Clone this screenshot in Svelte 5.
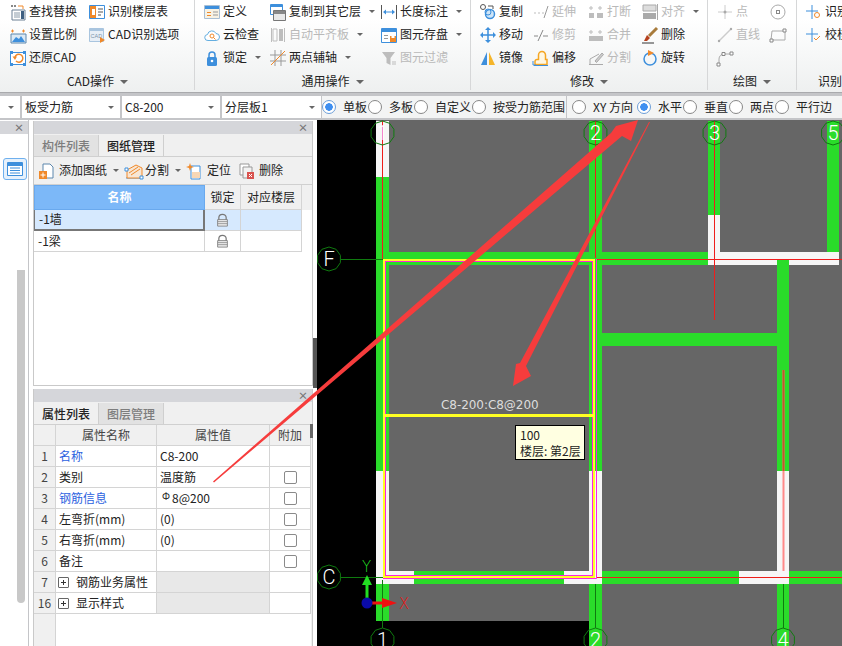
<script>
	// 16x16 ribbon and panel icons, kept as plain svg markup
	const B = '#3d8fdc';
	const O = '#f0892a';
	const G = '#bdbdbd';
	const icons = {
		find: `<path d="M1 1h2v2H1zM4 1h2v2H4z" fill="#888"/><path d="M8 2h5v3" fill="none" stroke="${O}"/><path d="M2 6h13v10H2z" fill="#fff" stroke="#6d8094"/><path d="M4 9h6M4 11h6M4 13h6" stroke="#8a9aa8"/><path d="M11 7h3v8h-3z" fill="#3f5f80"/>`,
		floors: `<path d="M.5 1.5h15v13H.5z" fill="#fff" stroke="${B}"/><path d="M1 2h6v12H1z" fill="${O}"/><path d="M9 5h5M9 8h5M9 11h3" stroke="#555"/><path d="M3 5h3v6H3z" fill="#fff"/>`,
		scale: `<path d="M1 4h3M2.500 2.500v3M12 4h3M13.500 2.500v3" stroke="${O}"/><path d="M1 7h15v9H1z" fill="#dbe9f5" stroke="#5d87ad"/><path d="M2 15l4-5 3 2 2-3 4 6z" fill="${B}"/>`,
		cad: `<path d="M.5 1.5h14v13H.5z" fill="#e7eef6" stroke="#a9c5df"/><path d="M1 2h13v2H1z" fill="#a9c5df"/><text x="1.500" y="11" font-size="5.500" fill="#7d95ab" font-family="Liberation Sans">CAD</text><path d="M11 10l5 3-5 3z" fill="${O}"/>`,
		restore: `<path d="M.5 2.500h15v12H.5z" fill="#fff" stroke="${B}"/><path d="M0 1h3v3H0zM13 1h3v3h-3zM0 13h3v3H0zM13 13h3v3h-3z" fill="${B}"/><path d="M5 7a4 4 0 1 1 1 4" fill="none" stroke="${O}" stroke-width="1.500"/><path d="M2.500 6.500H7L5 10z" fill="${O}"/>`,
		define: `<path d="M.5 1.500h15v13H.5z" fill="#f7f2e4" stroke="#a9bfd4"/><path d="M1 2h14v3H1z" fill="${B}"/><path d="M3 8h4v1H3zM3 11h4v1H3z" fill="${O}"/><path d="M9 8h5M9 11h5" stroke="#999"/>`,
		cloud: `<path d="M4 13.500a3 3 0 0 1-.500-6 4.500 4.500 0 0 1 8.500-1 3.500 3.500 0 0 1 0 7z" fill="#fff" stroke="#64aee0"/><circle cx="8" cy="9" r="2" fill="none" stroke="${O}"/><path d="M9.500 10.500l2 2" stroke="${O}"/>`,
		lock: `<path d="M5 8V5a3 3 0 0 1 6 0v3" fill="none" stroke="${B}" stroke-width="1.500"/><rect x="3" y="7" width="10" height="9" rx="1.500" fill="${B}"/><circle cx="8" cy="11" r="1.300" fill="#fff"/>`,
		copyFloor: `<path d="M.5.500h12v10H.5z" fill="#fff" stroke="${B}"/><path d="M1 1h11v2H1z" fill="${B}"/><path d="M3.500 6.500h12v10h-12z" fill="#e9e9e9" stroke="#777"/><path d="M4 7h11v3H4z" fill="#888"/>`,
		level: `<path d="M1.500 1v14M14.500 1v14" stroke="${G}"/><path d="M3 2h4v12H3z" fill="none" stroke="${G}"/><path d="M9 2h4v12H9z" fill="${G}"/>`,
		axes: `<path d="M0 5h16M0 11h16M5 0v16M11 0v16" stroke="#999"/><path d="M1 15L15 1" stroke="${O}"/>`,
		length: `<path d="M.5 1v14M15.500 1v14" stroke="#555"/><path d="M3 8h10" stroke="${B}"/><path d="M2 8l3-2.500v5zM14 8l-3-2.500v5z" fill="${B}"/>`,
		save: `<path d="M.5 1.500h15v14H.5z" fill="#fff" stroke="${B}"/><path d="M1 2h14v3H1z" fill="${B}"/><path d="M3 8h4v1H3zM3 11h4v1H3z" fill="#999"/><path d="M9 9h6v6H9z" fill="${O}"/><path d="M10.500 9h3v2h-3z" fill="#fff"/>`,
		filter: `<path d="M1 2h13L9.500 8v7l-4-2V8z" fill="${G}"/><path d="M11 12h4M11 14h4" stroke="${G}"/>`,
		copy: `<circle cx="3" cy="3" r="2.500" fill="#fff" stroke="#555"/><circle cx="10" cy="10" r="4.500" fill="#cfe5f7" stroke="${B}" stroke-width="1.500"/><circle cx="8" cy="8" r="3" fill="none" stroke="${B}"/><path d="M8 2h5v3" fill="none" stroke="#555"/>`,
		move: `<path d="M8 2v12M2 8h12" stroke="${B}" stroke-width="1.500"/><path d="M8 0l3 3H5zM8 16l3-3H5zM0 8l3-3v6zM16 8l-3-3v6z" fill="${B}"/>`,
		mirror: `<path d="M7 2v13H1z" fill="${B}"/><path d="M9 2v13h6z" fill="#f5b52a"/>`,
		extend: `<path d="M1 9h2M5 9h2M9 9h2" stroke="${G}"/><path d="M11 14l4-12" stroke="#999"/>`,
		trim: `<path d="M1 9h4M10 9h5" stroke="#888"/><path d="M5 14l5-11" stroke="#888"/>`,
		offset: `<path d="M2 14.500v-3a2 2 0 0 1 2-2h1.500V5a3.500 3.500 0 0 1 7 0v4.500H14v5z" fill="#fff7e2" stroke="#f5a623" stroke-width="1.500"/><path d="M0 11v4h3" fill="none" stroke="${B}"/><path d="M1 15.500h14" stroke="${B}"/>`,
		breakAt: `<path d="M1 9h5v5H1zM9 9h6v5H9z" fill="${G}"/><path d="M3 2v4M1 4h4M12 2v4M10 4h4" stroke="${G}"/>`,
		merge: `<path d="M1 9h14v5H1z" fill="${G}"/><path d="M3 3v4M1 5h4M12 3v4M10 5h4" stroke="${G}"/>`,
		split: `<path d="M1 14.500h14M2 15V9l9-5" fill="none" stroke="#aaa"/><path d="M7 11l7-8 1.500 1.500-7 8z" fill="#ccc" stroke="#aaa"/>`,
		align: `<path d="M1 1h13v6H1z" fill="#ddd" stroke="#aaa"/><path d="M1 9h13v6H1z" fill="#aaa"/><path d="M15.500 0v16" stroke="#aaa"/>`,
		erase: `<path d="M15 1L7 9" stroke="#a87b3c" stroke-width="3"/><path d="M5 8l3 3-3 3H2z" fill="#b5401d"/><path d="M0 16h12" stroke="#333"/>`,
		rotate: `<circle cx="8" cy="9" r="6" fill="none" stroke="${B}" stroke-width="1.500"/><path d="M6 0l6 3-6 3z" fill="${O}"/>`,
		point: `<path d="M8 1v14M1 8h14" stroke="#ccc"/><circle cx="8" cy="8" r="1.500" fill="#aaa"/>`,
		circle: `<circle cx="8" cy="8" r="7" fill="none" stroke="#aaa"/><rect x="6.500" y="6.500" width="3" height="3" fill="#fff" stroke="#888"/>`,
		line: `<path d="M2 14L14 2" stroke="#ccc" stroke-width="1.500"/><circle cx="2" cy="14" r="1.200" fill="#aaa"/><circle cx="14" cy="2" r="1.200" fill="#aaa"/>`,
		rect: `<path d="M2 4h13v9H1z" fill="none" stroke="#aaa"/><path d="M0 12h3v3H0zM13 2h3v3h-3z" fill="#fff" stroke="#888"/>`,
		arc: `<path d="M2 15V9a5 5 0 0 1 5-5h7" fill="none" stroke="#aaa"/><path d="M0 13h3v3H0zM5 2.500h3v3H5zM13 2h3v3h-3z" fill="#fff" stroke="#888"/>`,
		recogA: `<path d="M6 1v14M0 7h12" stroke="${B}"/><circle cx="11" cy="11" r="2.500" fill="none" stroke="${O}"/>`,
		recogB: `<path d="M6 1v14M0 7h12" stroke="${B}"/><path d="M8 11l2 2 4-4" fill="none" stroke="${O}"/>`,
		addSheet: `<path d="M4 1h7l3 3v11H4z" fill="#fff" stroke="#5d87ad"/><path d="M0 8h8v8H0z" fill="${O}"/><path d="M4 9.500v5M1.500 12h5" stroke="#fff"/>`,
		cutSheet: `<path d="M1 15h16" stroke="${B}"/><path d="M2 15V7l9-5 6 3v10z" fill="#f7e6d4" stroke="${O}"/><path d="M4 10l9-6M6 12l9-6" stroke="${O}"/><path d="M0 5h3v3H0zM15 13h3v3h-3z" fill="#fff" stroke="${B}"/>`,
		locate: `<path d="M4 3h9v13H4z" fill="#fff" stroke="${B}"/><path d="M5 9h8v6H5z" fill="#f7d7b5"/><path d="M3 0l1 3 3 1-3 1-1 3-1-3-3-1 3-1z" fill="${O}"/>`,
		delSheet: `<path d="M1 1h9v11H1z" fill="#fff" stroke="#999"/><path d="M4 4h9v11H4z" fill="#f2f2f2" stroke="#999"/><path d="M8 9h7v7H8z" fill="#d9534f"/><path d="M10 11l3 3M13 11l-3 3" stroke="#fff"/>`,
		padlock: `<path d="M3.500 8V5a4.500 4 0 0 1 9 0v3" fill="none" stroke="#777" stroke-width="1.500"/><path d="M2 7.500h12v8H2z" fill="#eee" stroke="#777"/><path d="M2 10h12M2 12.500h12" stroke="#888"/>`,
		dock: `<path d="M.5 1.500h15v13H.5z" fill="#fff" stroke="${B}"/><path d="M1 2h14v3H1z" fill="${B}"/><path d="M3 7h10M3 9.500h10M3 12h10" stroke="${B}"/>`
	};

	const groups = [
		{
			label: 'CAD操作', width: 195, widths: [79, 100],
			cols: [
				[{ i: 'find', t: '查找替换' }, { i: 'scale', t: '设置比例' }, { i: 'restore', t: '还原CAD' }],
				[{ i: 'floors', t: '识别楼层表' }, { i: 'cad', t: 'CAD识别选项' }]
			]
		},
		{
			label: '通用操作', width: 276, widths: [66, 111, 85],
			cols: [
				[{ i: 'define', t: '定义' }, { i: 'cloud', t: '云检查' }, { i: 'lock', t: '锁定', caret: true }],
				[{ i: 'copyFloor', t: '复制到其它层', caret: true }, { i: 'level', t: '自动平齐板', caret: true, off: true }, { i: 'axes', t: '两点辅轴', caret: true }],
				[{ i: 'length', t: '长度标注', caret: true }, { i: 'save', t: '图元存盘', caret: true }, { i: 'filter', t: '图元过滤', off: true }]
			]
		},
		{
			label: '修改', width: 237, widths: [53, 55, 54, 60],
			cols: [
				[{ i: 'copy', t: '复制' }, { i: 'move', t: '移动' }, { i: 'mirror', t: '镜像' }],
				[{ i: 'extend', t: '延伸', off: true }, { i: 'trim', t: '修剪', off: true }, { i: 'offset', t: '偏移' }],
				[{ i: 'breakAt', t: '打断', off: true }, { i: 'merge', t: '合并', off: true }, { i: 'split', t: '分割', off: true }],
				[{ i: 'align', t: '对齐', caret: true, off: true }, { i: 'erase', t: '删除' }, { i: 'rotate', t: '旋转' }]
			]
		},
		{
			label: '绘图', width: 89, widths: [53, 20],
			cols: [
				[{ i: 'point', t: '点', off: true }, { i: 'line', t: '直线', off: true }, { i: 'arc', t: '' }],
				[{ i: 'circle', t: '' }, { i: 'rect', t: '' }]
			]
		},
		{
			label: '识别', width: 60, widths: [60],
			cols: [[{ i: 'recogA', t: '识别' }, { i: 'recogB', t: '校核' }]]
		}
	];

	const selects = [
		{ t: '', w: 20 },
		{ t: '板受力筋', w: 98 },
		{ t: 'C8-200', w: 98 },
		{ t: '分层板1', w: 99 }
	];

	const radios = [
		{ t: '单板', on: true, w: 46 },
		{ t: '多板', w: 46 },
		{ t: '自定义', w: 58 },
		{ t: '按受力筋范围', w: 100 },
		{ t: 'XY 方向', w: 65, sep: true },
		{ t: '水平', on: true, w: 46 },
		{ t: '垂直', w: 46 },
		{ t: '两点', w: 46 },
		{ t: '平行边', w: 58 }
	];

	const sheetRows = [
		{ name: '-1墙', active: true },
		{ name: '-1梁' }
	];

	const props = [
		{ n: '1', name: '名称', val: 'C8-200', link: true },
		{ n: '2', name: '类别', val: '温度筋', check: true },
		{ n: '3', name: '钢筋信息', val: '8@200', link: true, check: true, bar: true },
		{ n: '4', name: '左弯折(mm)', val: '(0)', check: true },
		{ n: '5', name: '右弯折(mm)', val: '(0)', check: true },
		{ n: '6', name: '备注', val: '', check: true },
		{ n: '7', name: '钢筋业务属性', group: true },
		{ n: '16', name: '显示样式', group: true }
	];

	// plan geometry, in page coordinates (the svg viewBox starts at 317,120)
	const GREEN = '#2adc2a';
	const WHITE = '#f6f6f6';
	const walls = [
		[376, 121, 13, 56, WHITE], [376, 177, 13, 294, GREEN], [376, 471, 13, 112, WHITE], [376, 583, 13, 38, GREEN],
		[589, 121, 13, 350, GREEN], [589, 471, 13, 112, WHITE], [589, 583, 13, 63, GREEN],
		[708, 121, 12, 94, GREEN], [708, 215, 12, 50, WHITE],
		[827, 121, 12, 138, GREEN],
		[777, 259, 12, 212, GREEN], [777, 471, 12, 112, WHITE], [777, 583, 12, 63, GREEN],
		[376, 252, 332, 13, GREEN],
		[720, 252, 119, 7, WHITE], [720, 259, 57, 6, WHITE], [789, 259, 50, 6, WHITE],
		[602, 333, 175, 13, GREEN],
		[376, 571, 38, 13, WHITE], [414, 571, 150, 13, GREEN], [564, 571, 38, 13, WHITE],
		[602, 571, 137, 13, GREEN], [739, 571, 50, 13, WHITE], [789, 571, 53, 13, GREEN]
	];
	const bubbles = [
		{ x: 382.5, y: 133, t: '1' }, { x: 595.5, y: 133, t: '2' }, { x: 714.5, y: 133, t: '3' }, { x: 833, y: 133, t: '5' },
		{ x: 329, y: 259, t: 'F' }, { x: 329, y: 577, t: 'C' },
		{ x: 382.5, y: 640, t: '1' }, { x: 595.5, y: 640, t: '2' }, { x: 783, y: 640, t: '4' }
	];
	const decagon = Array.from({ length: 10 }, (_, k) => {
		const a = (k * Math.PI) / 5 + Math.PI / 10;
		return `${(12 * Math.cos(a)).toFixed(1)},${(12 * Math.sin(a)).toFixed(1)}`;
	}).join(' ');
</script>

{#snippet icon(name)}
	<svg class="ico" viewBox="0 0 16 16" aria-hidden="true">{@html icons[name]}</svg>
{/snippet}

<div class="app">
	<header class="ribbon">
		{#each groups as g}
			<section class="group" style="width:{g.width}px">
				<div class="cols">
					{#each g.cols as col, c}
						<div class="col" style="width:{g.widths[c]}px">
							{#each col as item}
								<div class="item" class:off={item.off}>
									{@render icon(item.i)}
									{#if item.t}<span class="lbl">{item.t}</span>{/if}
									{#if item.caret}<i class="caret"></i>{/if}
								</div>
							{/each}
						</div>
					{/each}
				</div>
				<div class="glabel">{g.label}<i class="caret wide"></i></div>
			</section>
		{/each}
	</header>

	<div class="toolbar">
		{#each selects as s}
			<div class="select" style="width:{s.w}px">
				<span>{s.t}</span><i class="caret"></i>
			</div>
		{/each}
		<div class="radios">
			{#each radios as r}
				<label class="radio" class:sep={r.sep} style="width:{r.w}px">
					<i class="dot" class:on={r.on}></i><span>{r.t}</span>
				</label>
			{/each}
		</div>
	</div>

	<main class="main">
		<aside class="dock">
			<div class="dock-strip">
				<div class="phead"><span class="x">×</span></div>
				<button class="dock-btn" type="button">{@render icon('dock')}</button>
				<div class="dock-scroll"></div>
			</div>
			<div class="panels">
				<section class="panel upper">
					<div class="phead"><span class="x">×</span></div>
					<div class="tabs">
						<div class="tab">构件列表</div>
						<div class="tab active">图纸管理</div>
					</div>
					<div class="ptools">
						<div class="tool">{@render icon('addSheet')}<span>添加图纸</span><i class="caret"></i></div>
						<div class="tool">{@render icon('cutSheet')}<span>分割</span><i class="caret"></i></div>
						<div class="tool">{@render icon('locate')}<span>定位</span></div>
						<div class="tool">{@render icon('delSheet')}<span>删除</span></div>
					</div>
					<div class="sheets">
						<div class="sh head name">名称</div>
						<div class="sh head">锁定</div>
						<div class="sh head">对应楼层</div>
						{#each sheetRows as row}
							<div class="sh left" class:sel={row.active} class:cur={row.active}>{row.name}</div>
							<div class="sh" class:sel={row.active}><svg class="pad" viewBox="0 0 16 16">{@html icons.padlock}</svg></div>
							<div class="sh" class:sel={row.active}></div>
						{/each}
					</div>
				</section>

				<section class="panel lower">
					<div class="phead"><span class="x">×</span></div>
					<div class="tabs">
						<div class="tab active">属性列表</div>
						<div class="tab">图层管理</div>
					</div>
					<div class="props">
						<div class="pr hd"></div>
						<div class="pr hd">属性名称</div>
						<div class="pr hd">属性值</div>
						<div class="pr hd">附加</div>
						{#each props as p}
							<div class="pr num">{p.n}</div>
							<div class="pr left" class:link={p.link}>
								{#if p.group}<i class="plus"></i><span class="gname">{p.name}</span>{:else}{p.name}{/if}
							</div>
							<div class="pr left" class:shade={p.group}>
								{#if p.bar}<span class="phi">Φ</span>{/if}{p.val ?? ''}
							</div>
							<div class="pr">{#if p.check}<i class="check"></i>{/if}</div>
						{/each}
					</div>
					<div class="num-rest"></div>
					<div class="vbar"></div>
				</section>
			</div>
			<div class="splitter"><div class="handle"></div></div>
		</aside>

		<div class="canvas">
			<svg class="plan" viewBox="317 120 525 526">
				<rect x="317" y="120" width="525" height="526" fill="#000" />
				<rect x="376" y="120" width="466" height="501" fill="#666" />
				<rect x="589" y="621" width="253" height="25" fill="#666" />
				{#each walls as w}
					<rect x={w[0]} y={w[1]} width={w[2]} height={w[3]} fill={w[4]} />
				{/each}

				<!-- axis lines -->
				<g fill="none" stroke-width="1">
					<path d="M341 259.500H383M341 577.500H383M382.500 580V628M595.500 584V628M783.500 584V628" stroke="#0f7a0f" />
					<path d="M382.500 121V259M595.500 121V258M714.500 121V320M597 259.500H842M597 577.500H842" stroke="#f01c1c" />
					<path d="M783.500 370V571" stroke="#ff8a8a" stroke-width="2" />
					<path d="M783.500 370V471" stroke="#c2582a" stroke-width="2" />
					<rect x="384" y="260" width="210" height="317" stroke="#ffff22" stroke-width="2" />
					<rect x="385.500" y="261.500" width="207" height="314" stroke="#ff22dd" />
					<path d="M596.500 259V578.500H383" stroke="#ff22dd" />
				</g>
				<rect x="385" y="414" width="208" height="3" fill="#ffff22" />
				<text class="dim" x="441" y="409">C8-200:C8@200</text>

				{#each bubbles as b}
					<g transform="translate({b.x} {b.y})">
						<polygon points={decagon} fill="none" stroke="#0f7a0f" />
						<text class="axis" y="7" text-anchor="middle">{b.t}</text>
					</g>
				{/each}

				<!-- ucs marker -->
				<path d="M365.500 603V582H368.500V603z" fill="#22dd22" />
				<path d="M362 585L367 575L372 585z" fill="#22dd22" />
				<path d="M367 601.500H385V604.500H367z" fill="#f01010" />
				<path d="M382 598L397 603L382 608z" fill="#f01010" />
				<circle cx="367" cy="603" r="5.500" fill="#0a0aa8" />
				<text class="ucs" x="362" y="572" fill="#22dd22">Y</text>
				<text class="ucs" x="399" y="609" fill="#f01010">X</text>
			</svg>
			<div class="tip">100<br />楼层: 第2层</div>
		</div>

		<!-- hand drawn markup that sits over both the panel and the plan -->
		<svg class="marks" viewBox="0 120 842 526">
			<polygon points="213,481.500 611,133 616,126 638,120 631,141 622,136 214,482.500" />
			<polygon points="650,122 526,366 531,376 513,386 516,364 520,363 649,122" />
		</svg>
	</main>
</div>

<style>
	:global(body) {
		margin: 0;
		background: #fff;
	}
	.app {
		width: 842px;
		height: 646px;
		overflow: hidden;
		display: flex;
		flex-direction: column;
		font: 12px/1.2 'Noto Sans CJK SC', 'Liberation Sans', sans-serif;
		color: #222;
	}

	/* ribbon */
	.ribbon {
		height: 93px;
		flex: none;
		display: flex;
		background: linear-gradient(#fff 20%, #eef0f0);
		box-sizing: border-box;
		border-bottom: 1px solid #a9aaad;
	}
	.group {
		flex: none;
		box-sizing: border-box;
		height: 90px;
		padding-left: 9px;
		border-right: 1px solid #d6d7d8;
		position: relative;
	}
	.group:first-child {
		padding-left: 10px;
	}
	.cols {
		display: flex;
		height: 69px;
	}
	.col {
		flex: none;
	}
	.item {
		height: 23px;
		display: flex;
		align-items: center;
		gap: 3px;
		white-space: nowrap;
	}
	.item.off .lbl {
		color: #b9b9b9;
	}
	.ico {
		width: 16px;
		height: 16px;
		flex: none;
		overflow: visible;
	}
	.caret {
		display: inline-block;
		width: 0;
		height: 0;
		margin-left: 5px;
		border: 3px solid transparent;
		border-top: 3px solid #666;
		border-bottom: 0;
	}
	.caret.wide {
		margin-left: 6px;
		border-width: 4px 4px 0;
		vertical-align: 2px;
	}
	.glabel {
		height: 22px;
		line-height: 24px;
		text-align: center;
		margin-left: -9px;
	}
	.group:last-child .glabel {
		text-align: left;
		margin-left: 12px;
	}

	/* option bar */
	.toolbar {
		height: 27px;
		flex: none;
		display: flex;
		gap: 2px;
		box-sizing: border-box;
		padding: 3px 0 2px;
		background: #c4c5c8;
		white-space: nowrap;
	}
	.select {
		flex: none;
		box-sizing: border-box;
		padding: 0 6px 0 3px;
		background: #fff;
		display: flex;
		align-items: center;
		justify-content: space-between;
	}
	.radios {
		flex: 1;
		display: flex;
		background: #f3f4f4;
		padding-left: 0;
		margin-left: -1px;
	}
	.radio {
		flex: none;
		display: flex;
		align-items: center;
		gap: 7px;
		box-sizing: border-box;
		position: relative;
	}
	.radio.sep::before {
		content: '';
		position: absolute;
		left: -6px;
		top: 0;
		bottom: 0;
		width: 1px;
		background: #c4c5c8;
	}
	.dot {
		width: 14px;
		height: 14px;
		flex: none;
		border-radius: 50%;
		border: 1px solid #888;
		background: #fff;
		box-sizing: border-box;
	}
	.dot.on {
		background: radial-gradient(circle, #3f8ff0 0 3.5px, #fff 4px);
		border-color: #6d9fd8;
	}

	/* docked panels */
	.main {
		position: relative;
		flex: 1;
		min-height: 0;
		display: flex;
	}
	.dock {
		width: 317px;
		flex: none;
		display: flex;
		background: #fff;
	}
	.dock-strip {
		width: 29px;
		flex: none;
		box-sizing: border-box;
		border-right: 1px solid #c4c5c8;
		display: flex;
		flex-direction: column;
		padding-top: 1px;
	}
	.phead {
		height: 13px;
		flex: none;
		background: #d5d6da;
		display: flex;
		justify-content: flex-end;
		align-items: center;
		padding-right: 4px;
	}
	.x {
		font-size: 10px;
		font-weight: 700;
		color: #777;
		line-height: 13px;
	}
	.dock-btn {
		width: 24px;
		height: 22px;
		margin: 24px 0 0 3px;
		padding: 0;
		background: #e6f1fc;
		border: 1px solid #6fb0ee;
		border-radius: 3px;
		display: flex;
		align-items: center;
		justify-content: center;
	}
	.dock-scroll {
		width: 8px;
		height: 333px;
		margin: 90px 0 0 17px;
		background: #c8c8c8;
		border-radius: 0 0 4px 4px;
	}
	.panels {
		width: 280px;
		margin-left: 4px;
		flex: none;
		display: flex;
		flex-direction: column;
		gap: 3px;
		padding-top: 1px;
	}
	.panel {
		position: relative;
		box-sizing: border-box;
		border: 1px solid #c9c9c9;
		border-width: 0 1px 1px;
		background: #fff;
		display: flex;
		flex-direction: column;
	}
	.upper {
		height: 265px;
	}
	.lower {
		flex: 1;
		min-height: 0;
		background: #f0f0f0;
		border-bottom: 0;
	}
	.tabs {
		height: 23px;
		flex: none;
		display: flex;
		align-items: flex-end;
		background: #f0f0f0;
		box-sizing: border-box;
		border-bottom: 1px solid #d0d0d0;
	}
	.tab {
		width: 65px;
		height: 21px;
		box-sizing: border-box;
		line-height: 21px;
		text-align: center;
		background: #e2e2e2;
		color: #7d7d7d;
		border-right: 1px solid #cfcfcf;
		font-weight: 500;
	}
	.tab.active {
		background: #f0f0f0;
		color: #222;
	}
	.ptools {
		height: 27px;
		flex: none;
		display: flex;
		align-items: center;
		padding-left: 5px;
		gap: 5px;
		background: #f0f0f0;
		border-bottom: 1px solid #d0d0d0;
	}
	.tool {
		display: flex;
		align-items: center;
		gap: 4px;
		margin-right: 1px;
	}
	.tool:last-child {
		margin-left: 2px;
	}
	.tool .caret {
		margin-left: 2px;
	}
	.sheets {
		display: grid;
		grid-template-columns: 171px 36px 61px;
		grid-auto-rows: 21px;
		grid-template-rows: 25px;
		background: linear-gradient(#f0f0f0 25px, transparent 25px);
	}
	.sh {
		box-sizing: border-box;
		border-right: 1px solid #d4d4d4;
		border-bottom: 1px solid #d4d4d4;
		display: flex;
		align-items: center;
		justify-content: center;
	}
	.sh.head {
		background: #f0f0f0;
	}
	.sh.name {
		background: #7cb8f8;
		border: 1px solid #69a9ee;
		color: #fff;
		font-weight: 700;
	}
	.sh.left,
	.pr.left {
		justify-content: flex-start;
		padding-left: 4px;
	}
	.sh.sel {
		background: #d6e9fe;
	}
	.sh.cur {
		border: 1px solid #777;
		border-width: 0 2px 2px 1px;
	}
	.pad {
		width: 13px;
		height: 14px;
	}

	.props {
		display: grid;
		grid-template-columns: 22px 101px 113px 41px;
		grid-auto-rows: 21px;
		background: #fff;
		flex: none;
		margin-right: 1px;
	}
	.pr {
		box-sizing: border-box;
		background: #fff;
		border-right: 1px solid #d4d4d4;
		border-bottom: 1px solid #d4d4d4;
		display: flex;
		align-items: center;
		justify-content: center;
		white-space: nowrap;
	}
	.pr.hd,
	.pr.num {
		background: #f0f0f0;
		color: #444;
	}
	.pr.left {
		padding-left: 3px;
	}
	.pr.link {
		color: #2c62e0;
	}
	.pr.shade {
		background: #e8e8e8;
	}
	.phi {
		font-size: 10px;
		margin: 0 2px;
		position: relative;
		top: -2px;
	}
	.check {
		width: 13px;
		height: 13px;
		box-sizing: border-box;
		border: 1px solid #8a8a8a;
		border-radius: 2px;
		background: #fff;
	}
	.plus {
		width: 11px;
		height: 11px;
		margin-left: -1px;
		box-sizing: border-box;
		border: 1px solid #666;
		border-radius: 1px;
		background:
			linear-gradient(#333, #333) center / 5px 1px no-repeat,
			linear-gradient(#333, #333) center / 1px 5px no-repeat,
			#fff;
	}
	.gname {
		margin-left: 7px;
	}
	.num-rest {
		flex: 1;
		background: linear-gradient(90deg, #f0f0f0 21px, #d4d4d4 21px 22px, #fff 22px);
		margin-right: 1px;
	}
	.vbar {
		position: absolute;
		right: -1px;
		top: 35px;
		width: 3px;
		height: 14px;
		background: #666;
	}
	.splitter {
		flex: 1;
		position: relative;
	}
	.handle {
		position: absolute;
		left: 0;
		right: 0;
		top: 218px;
		height: 50px;
		background: #555;
	}

	/* plan view */
	.canvas {
		position: relative;
		flex: 1;
		min-width: 0;
	}
	.plan {
		display: block;
		width: 525px;
		height: 526px;
	}
	.dim {
		font: 12px 'DejaVu Sans', sans-serif;
		fill: #ddd;
		letter-spacing: -0.05px;
	}
	.axis {
		font: 300 20px Roboto, sans-serif;
		fill: #fff;
	}
	.ucs {
		font: 300 15px 'DejaVu Sans', sans-serif;
	}
	.tip {
		position: absolute;
		left: 198px;
		top: 305px;
		width: 70px;
		height: 35px;
		box-sizing: border-box;
		padding: 1px 0 0 4px;
		background: #ffffe1;
		border: 1px solid #000;
		line-height: 16px;
		white-space: nowrap;
	}
	.marks {
		position: absolute;
		left: 0;
		top: 0;
		width: 842px;
		height: 526px;
		pointer-events: none;
	}
	.marks polygon {
		fill: #f63c3c;
	}
</style>
